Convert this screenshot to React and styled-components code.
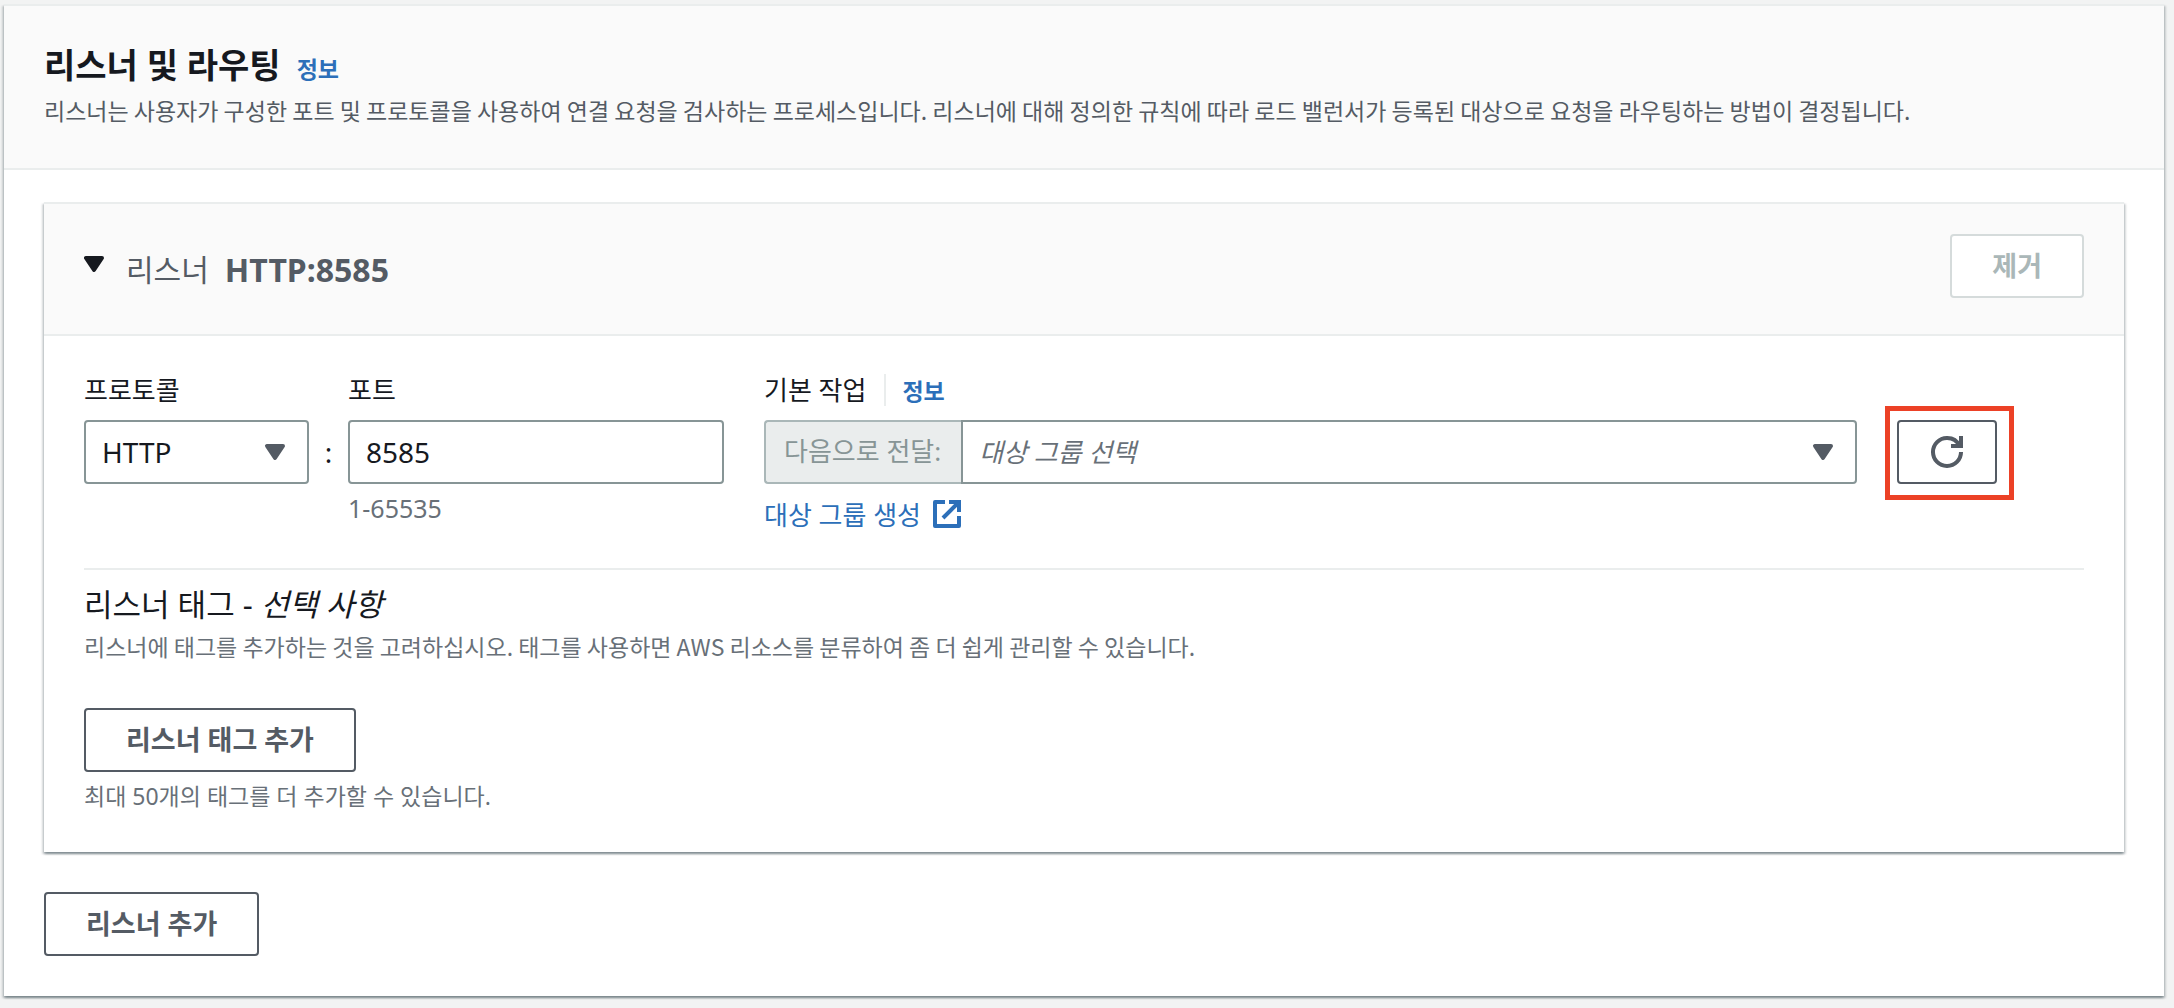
import React, { useState } from 'react'
import styled, { createGlobalStyle, css } from 'styled-components'

const GlobalStyle = createGlobalStyle`
    * {
        box-sizing: border-box;
    }
    body {
        margin: 0;
        background-color: #f2f3f3;
        color: #16191f;
        font-family: 'Noto Sans', 'Noto Sans CJK KR', sans-serif;
        font-size: 26px;
    }
    button, input, select {
        margin: 0;
        font-family: inherit;
        color: inherit;
    }
`
const cardShadow = css`
    border-top: 2px solid #eaeded;
    box-shadow: 0 2px 2px 0 rgba(0, 28, 36, 0.3), 2px 2px 2px 0 rgba(0, 28, 36, 0.15), -2px 2px 2px 0 rgba(0, 28, 36, 0.15);
`
const Page = styled.main`
    padding: 4px 10px 12px 4px;
`
const Panel = styled.section`
    background-color: white;
    ${cardShadow}
`
const PanelHeader = styled.header`
    padding: 36px 40px;
    background-color: #fafafa;
    border-bottom: 2px solid #eaeded;
`
const TitleRow = styled.div`
    display: flex;
    align-items: baseline;
    gap: 16px;
`
const Title = styled.h2`
    margin: 0;
    font-size: 34px;
    line-height: 46px;
    font-weight: 700;
`
const InfoLink = styled.a`
    color: #2c6fb9;
    font-size: 23px;
    font-weight: 700;
    text-decoration: none;
`
const Description = styled.p`
    margin: 0;
    font-family: 'Noto Sans CJK KR', sans-serif;
    font-size: 23px;
    line-height: 44px;
    color: #545b64;
`
const PanelBody = styled.div`
    padding: 32px 40px 40px;
`
const Card = styled.section`
    margin-bottom: 40px;
    background-color: white;
    ${cardShadow}
`
const CardHeader = styled.header`
    display: flex;
    align-items: flex-start;
    justify-content: space-between;
    padding: 30px 40px 36px;
    background-color: #fafafa;
    border-bottom: 2px solid #eaeded;
`
const Toggle = styled.button`
    display: flex;
    align-items: flex-start;
    gap: 22px;
    padding: 14px 0 0;
    border: none;
    background: none;
    color: #16191f;
    cursor: pointer;
`
const ToggleText = styled.span`
    display: flex;
    gap: 16px;
    font-size: 30px;
    line-height: 44px;
    color: #545b64;
`
const ToggleValue = styled.strong`
    font-size: 32px;
`
const Button = styled.button`
    height: 64px;
    padding: 0 40px;
    border: 2px solid #545b64;
    border-radius: 4px;
    background-color: white;
    color: #545b64;
    font-size: 27px;
    line-height: 36px;
    font-weight: 700;
    cursor: pointer;

    &:disabled {
        border-color: #d5dbdb;
        color: #aab7b8;
        cursor: default;
    }
`
const IconButton = styled(Button)`
    display: flex;
    align-items: center;
    justify-content: center;
    width: 100px;
    padding: 0;
`
const CardBody = styled.div`
    padding: 36px 40px 40px;
`
const FieldRow = styled.div`
    display: grid;
    grid-template-columns: 225px 39px 376px minmax(0, 1fr) auto;
    padding-bottom: 34px;
    border-bottom: 2px solid #eaeded;
`
const Field = styled.div`
    margin-left: ${props => props.$indent ? '40px' : '0'};
`
const LabelRow = styled.div`
    display: flex;
    align-items: center;
    height: 36px;
    margin-bottom: 12px;
`
const Label = styled.label`
    line-height: 36px;
`
const LabelInfo = styled.span`
    display: flex;
    align-items: center;
    height: 32px;
    margin-left: 18px;
    padding-left: 16px;
    border-left: 2px solid #eaeded;
`
const Colon = styled.span`
    padding-top: 48px;
    font-size: 28px;
    line-height: 64px;
    text-align: center;
`
const SelectBox = styled.div`
    position: relative;
    flex: 1;
    color: #545b64;
`
const Select = styled.select`
    appearance: none;
    display: block;
    width: 100%;
    height: 64px;
    padding: 0 60px 0 16px;
    border: 2px solid #879596;
    border-radius: ${props => props.$placeholder ? '0 4px 4px 0' : '4px'};
    background-color: white;
    color: ${props => props.$placeholder ? '#687078' : '#16191f'};
    font-size: ${props => props.$placeholder ? '26px' : '28px'};
    font-style: ${props => props.$placeholder ? 'italic' : 'normal'};
`
const SelectCaret = styled.span`
    position: absolute;
    top: 16px;
    right: 18px;
    height: 32px;
    pointer-events: none;
`
const Input = styled.input`
    display: block;
    width: 100%;
    height: 64px;
    padding: 0 16px;
    border: 2px solid #879596;
    border-radius: 4px;
    background-color: white;
    font-size: 28px;
`
const ForwardGroup = styled.div`
    display: flex;
`
const Prefix = styled.span`
    display: flex;
    align-items: center;
    height: 64px;
    padding: 0 20px 4px 18px;
    border: 2px solid #aab7b8;
    border-right: none;
    border-radius: 4px 0 0 4px;
    background-color: #eaeded;
    color: #879596;
`
const Hint = styled.p`
    margin: 8px 0 0;
    font-size: ${props => props.$numeric ? '25px' : '23px'};
    line-height: 32px;
    color: #687078;
`
const CreateLink = styled.a`
    display: inline-flex;
    align-items: center;
    gap: 10px;
    height: 40px;
    margin-top: 10px;
    color: #2c6fb9;
    text-decoration: none;
`
const RefreshArea = styled.div`
    position: relative;
    align-self: start;
    margin: 48px 87px 0 40px;

    &::after {
        content: '';
        position: absolute;
        inset: -14px -17px -16px -12px;
        border: 5px solid #ec4126;
        pointer-events: none;
    }
`
const TagSection = styled.div`
    padding-top: 12px;
`
const TagTitle = styled.h3`
    margin: 0;
    font-size: 31px;
    line-height: 44px;
    font-weight: 400;
`
const TagDescription = styled.p`
    margin: 0;
    font-family: 'Noto Sans CJK KR', sans-serif;
    font-size: 23px;
    line-height: 40px;
    color: #687078;
`
const TagActions = styled.div`
    padding-top: 42px;
`

const Caret = ({ width = 32 }) => (
  <svg width={width} height='32' viewBox={width === 20 ? '3 0 10 16' : '0 0 16 16'} aria-hidden='true'>
    <path d='M4 5h8l-4 6-4-6z' fill='currentColor' stroke='currentColor' strokeWidth='2' strokeLinejoin='round' />
  </svg>
)

const RefreshIcon = () => (
  <svg width='32' height='32' viewBox='0 0 16 16' fill='none' stroke='currentColor' strokeWidth='2' aria-hidden='true'>
    <path d='M10 5h5V0' />
    <path d='M15 8a6.957 6.957 0 0 1-7 7 6.957 6.957 0 0 1-7-7 6.957 6.957 0 0 1 7-7 6.87 6.87 0 0 1 6.3 4' />
  </svg>
)

const ExternalIcon = () => (
  <svg width='32' height='32' viewBox='0 0 16 16' fill='none' stroke='currentColor' strokeWidth='2' aria-hidden='true'>
    <path d='M9 2h5v5' />
    <path d='M6 10l8-8' />
    <path d='M14 9v5H2V2h5' strokeLinejoin='round' />
  </svg>
)


const App = () => {
    const [expanded, setExpanded] = useState(true)
    const [protocol, setProtocol] = useState('HTTP')
    const [port, setPort] = useState('8585')

  return (
    <Page>
      <GlobalStyle />
      <Panel>
        <PanelHeader>
          <TitleRow>
            <Title>리스너 및 라우팅</Title>
            <InfoLink href='#listeners'>정보</InfoLink>
          </TitleRow>
          <Description>리스너는 사용자가 구성한 포트 및 프로토콜을 사용하여 연결 요청을 검사하는 프로세스입니다. 리스너에 대해 정의한 규칙에 따라 로드 밸런서가 등록된 대상으로 요청을 라우팅하는 방법이 결정됩니다.</Description>
        </PanelHeader>
        <PanelBody>
          <Card>
            <CardHeader>
              <Toggle type='button' aria-expanded={expanded} onClick={() => setExpanded(!expanded)}>
                <Caret width={20} />
                <ToggleText>리스너 <ToggleValue>{protocol}:{port}</ToggleValue></ToggleText>
              </Toggle>
              <Button type='button' disabled>제거</Button>
            </CardHeader>
            {expanded && (
              <CardBody>
                <FieldRow>
                  <Field>
                    <LabelRow><Label htmlFor='protocol'>프로토콜</Label></LabelRow>
                    <SelectBox>
                      <Select id='protocol' value={protocol} onChange={(e) => setProtocol(e.target.value)}>
                        <option>HTTP</option>
                        <option>HTTPS</option>
                      </Select>
                      <SelectCaret><Caret /></SelectCaret>
                    </SelectBox>
                  </Field>
                  <Colon>:</Colon>
                  <Field>
                    <LabelRow><Label htmlFor='port'>포트</Label></LabelRow>
                    <Input type='text' id='port' value={port} onChange={(e) => setPort(e.target.value)} />
                    <Hint $numeric>1-65535</Hint>
                  </Field>
                  <Field $indent>
                    <LabelRow>
                      <Label htmlFor='target'>기본 작업</Label>
                      <LabelInfo><InfoLink href='#action'>정보</InfoLink></LabelInfo>
                    </LabelRow>
                    <ForwardGroup>
                      <Prefix>다음으로 전달:</Prefix>
                      <SelectBox>
                        <Select id='target' $placeholder defaultValue=''>
                          <option value=''>대상 그룹 선택</option>
                        </Select>
                        <SelectCaret><Caret /></SelectCaret>
                      </SelectBox>
                    </ForwardGroup>
                    <CreateLink href='#create'>대상 그룹 생성 <ExternalIcon /></CreateLink>
                  </Field>
                  <RefreshArea>
                    <IconButton type='button' aria-label='새로 고침'><RefreshIcon /></IconButton>
                  </RefreshArea>
                </FieldRow>
                <TagSection>
                  <TagTitle>리스너 태그 - <em>선택 사항</em></TagTitle>
                  <TagDescription>리스너에 태그를 추가하는 것을 고려하십시오. 태그를 사용하면 AWS 리소스를 분류하여 좀 더 쉽게 관리할 수 있습니다.</TagDescription>
                  <TagActions>
                    <Button type='button'>리스너 태그 추가</Button>
                    <Hint>최대 50개의 태그를 더 추가할 수 있습니다.</Hint>
                  </TagActions>
                </TagSection>
              </CardBody>
            )}
          </Card>
          <Button type='button'>리스너 추가</Button>
        </PanelBody>
      </Panel>
    </Page>
  )
}

export default App
